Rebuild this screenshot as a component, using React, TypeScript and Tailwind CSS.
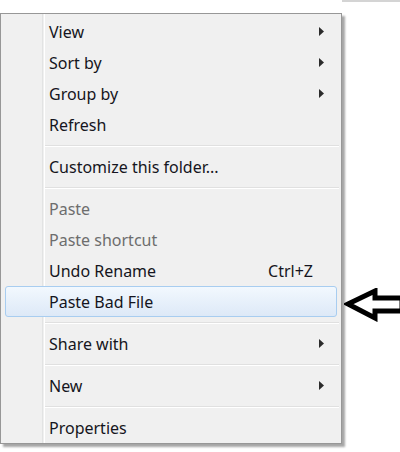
// Windows 7 style explorer context menu with a pointer arrow
type Row =
  | { kind: 'item'; label: string; sub?: boolean; disabled?: boolean; shortcut?: string; active?: boolean }
  | { kind: 'sep' };

const rows: Row[] = [
  { kind: 'item', label: 'View', sub: true },
  { kind: 'item', label: 'Sort by', sub: true },
  { kind: 'item', label: 'Group by', sub: true },
  { kind: 'item', label: 'Refresh' },
  { kind: 'sep' },
  { kind: 'item', label: 'Customize this folder...' },
  { kind: 'sep' },
  { kind: 'item', label: 'Paste', disabled: true },
  { kind: 'item', label: 'Paste shortcut', disabled: true },
  { kind: 'item', label: 'Undo Rename', shortcut: 'Ctrl+Z' },
  { kind: 'item', label: 'Paste Bad File', active: true },
  { kind: 'sep' },
  { kind: 'item', label: 'Share with', sub: true },
  { kind: 'sep' },
  { kind: 'item', label: 'New', sub: true },
  { kind: 'sep' },
  { kind: 'item', label: 'Properties' },
];

function SubArrow() {
  return (
    <svg width="5" height="9" viewBox="0 0 5 9" className="shrink-0">
      <path d="M0 0 L5 4.5 L0 9 Z" fill="#2b2b2b" />
    </svg>
  );
}

function PointerArrow() {
  return (
    <svg width="56" height="34" viewBox="0 0 56 34" className="shrink-0">
      <path
        d="M4 16 L31 3 L31 10 L58 10 L58 23 L31 23 L31 30 Z"
        fill="#ffffff"
        stroke="#000000"
        strokeWidth="5"
        strokeLinejoin="miter"
      />
    </svg>
  );
}

export default function App() {
  return (
    <div
      className="w-[400px] h-[452px] bg-white overflow-hidden flex flex-col"
      style={{ fontFamily: '"Noto Sans", "Open Sans", Arial, sans-serif' }}
    >
      <div className="flex justify-end">
        <div className="w-[58px] h-[2px] bg-[#d4d4d4]" />
      </div>
      <div className="flex items-start mt-[11px]">
        <div className="relative w-[344px] border border-[#979797] bg-[#f0f0f0] pt-[2px] shadow-[3px_3px_2px_rgba(0,0,0,0.35)]">
          {/* gutter line */}
          <div className="absolute top-0 bottom-0 left-[41px] w-[2px] border-l border-[#e2e3e3] shadow-[1px_0_0_#ffffff]" />
          {rows.map((r, i) =>
            r.kind === 'sep' ? (
              <div key={i} className="h-[11px] flex flex-col justify-center pl-[43px] pr-[2px]">
                <div className="h-px bg-[#e0e0e0]" />
                <div className="h-px bg-white" />
              </div>
            ) : (
              <div
                key={i}
                className={
                  'relative mx-[4px] h-[31px] flex items-center pl-[44px] rounded-[3px] text-[16px] ' +
                  (r.active
                    ? 'z-10 border border-[#a8cdf0] bg-gradient-to-b from-[#f2f8fe] to-[#dde9f7] pr-[12px]'
                    : 'pr-[13px]') +
                  (r.disabled ? ' text-[#6d6d6d]' : ' text-[#151520]')
                }
              >
                <span className={r.active ? '-ml-px' : ''}>{r.label}</span>
                <span className="flex-1" />
                {r.shortcut && <span className="mr-[11px]">{r.shortcut}</span>}
                {r.sub && <SubArrow />}
              </div>
            )
          )}
        </div>
        <div className="mt-[275px] ml-[2px]">
          <PointerArrow />
        </div>
      </div>
    </div>
  );
}
